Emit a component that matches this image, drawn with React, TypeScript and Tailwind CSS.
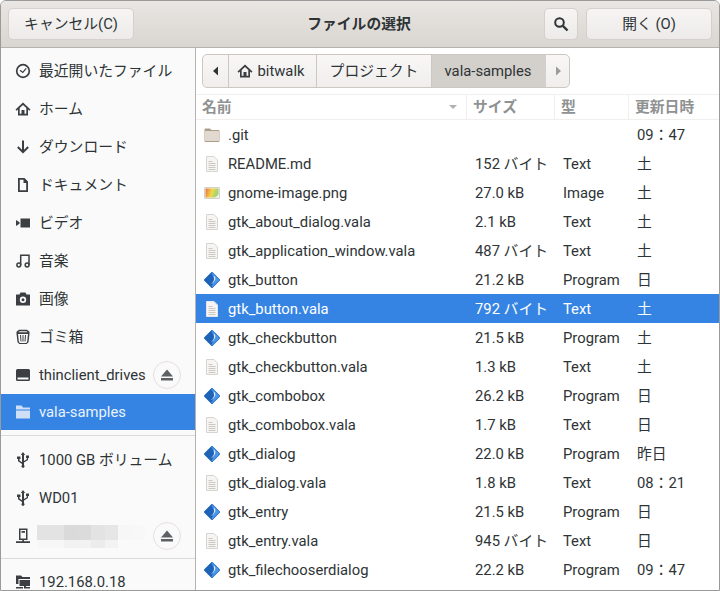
import type { ReactNode } from "react";

function Sym({ children, cls = "text-[#3b3f41]" }: { children: ReactNode; cls?: string }) {
  return (
    <svg viewBox="0 0 16 16" className={`w-4 h-4 shrink-0 ${cls}`} fill="currentColor">
      {children}
    </svg>
  );
}

const HomeIcon = () => (
  <Sym>
    <path
      fillRule="evenodd"
      d="M8 1.500 .500 8.600 1.700 9.800 3 8.600V14.500h10V8.600l1.300 1.200 1.200-1.200zM8 4l3.300 3.100V12.800H9.500V9h-3v3.800H4.700V7.100z"
    />
  </Sym>
);

const EjectIcon = () => (
  <svg viewBox="0 0 16 16" className="w-4 h-4 text-[#5d6163]" fill="currentColor">
    <path d="M8 2.500 14 9.500H2z M2 11h12v2.500H2z" />
  </svg>
);

const UsbIcon = () => (
  <Sym>
    <path d="M8 0 5.800 3H7v7.200L4.500 8.500V7H5.500V4.500H2V7h1v2.200l4 2.700v1.300a1.500 1.500 0 1 0 2 0V10.400l4-2.400V6h1V3.500h-3V6h.8v1.200L9 9V3h1.200z" />
  </Sym>
);

const sidebarIcons: Record<string, ReactNode> = {
  recent: (
    <Sym>
      <circle cx="8" cy="8" r="6.300" fill="none" stroke="currentColor" strokeWidth="1.700" />
      <path d="M5 7.200 7.800 9.500 11.200 5.300" fill="none" stroke="currentColor" strokeWidth="1.200" />
    </Sym>
  ),
  home: <HomeIcon />,
  down: (
    <Sym>
      <path d="M8 1.500V13M2.800 8 8 13.200 13.200 8" fill="none" stroke="currentColor" strokeWidth="2" />
    </Sym>
  ),
  doc: (
    <Sym>
      <path fillRule="evenodd" d="M3 1h6.500L13 4.500V15H3zm1.800 1.700v10.600h6.400V6H8.500V2.700z" />
    </Sym>
  ),
  video: (
    <Sym>
      <path d="M5.500 3.500H15v9H5.500zM1 5l3.500 2.200v1.600L1 11z" />
    </Sym>
  ),
  music: (
    <Sym>
      <g fill="none" stroke="currentColor" strokeWidth="1.500">
        <circle cx="3.800" cy="12" r="1.900" />
        <circle cx="12.100" cy="12" r="1.900" />
        <path d="M5.700 12V2.200H14V12" />
      </g>
    </Sym>
  ),
  camera: (
    <Sym>
      <path fillRule="evenodd" d="M5.500 1.500h5L11.500 3.500H15v11H1v-11h3.500zM8 5.500a3.200 3.200 0 1 0 0 6.400 3.200 3.200 0 0 0 0-6.400zM8 7.200a1.500 1.500 0 1 1 0 3 1.500 1.500 0 0 1 0-3z" />
    </Sym>
  ),
  trash: (
    <Sym>
      <path fillRule="evenodd" d="M4 .800h8l2.500 2v2l-1 8.500-1.800 1.700H4.300l-1.800-1.700-1-8.500v-2zM4.500 2.200 3.500 3.200h9l-1-1zM3 5l.9 8 1 1h6.200l1-1 .9-8z" />
      <path d="M5 6h1l.5 6.500h-1zM7.500 6h1v6.500h-1zM10 6h1l-.5 6.500h-1z" />
    </Sym>
  ),
  drive: (
    <Sym>
      <path fillRule="evenodd" d="M2.500 2h11A1.500 1.500 0 0 1 15 3.500v9a1.500 1.500 0 0 1-1.500 1.500h-11A1.500 1.500 0 0 1 1 12.500v-9A1.500 1.500 0 0 1 2.500 2zM2.500 10.500v2h11v-2z" />
    </Sym>
  ),
  folder: (
    <Sym cls="text-[#cfe0f6]">
      <path d="M1 1.500h5.500L8 3.500h7v2H1zM1 6.500h14V14.500H1z" />
    </Sym>
  ),
  usb: <UsbIcon />,
  computer: (
    <Sym>
      <path fillRule="evenodd" d="M4 .500h8.500v11.500H4zM5.500 2v8.500h5.500V2zM6.500 3h3.500v1.700H6.500zM7.300 12h1.600v1.300H15v1.700H1v-1.700h6.300z" />
    </Sym>
  ),
  network: (
    <Sym>
      <path d="M1 1.500h5l1.500 1.500H15v2H3.500v5H1z" />
      <path d="M4.500 6H15v6H11v1h4v1.500H9v-2.500H4.500z M1 13h7v1.500H1z" />
    </Sym>
  ),
};

function SideRow({ icon, label, eject }: { icon: string; label: ReactNode; eject?: boolean }) {
  return (
    <div className="h-[38px] shrink-0 flex items-center pl-[14px] pr-[14px] gap-2 text-[#2e3436]">
      {sidebarIcons[icon]}
      <div className="flex-1 min-w-0 whitespace-nowrap">{label}</div>
      {eject && (
        <div className="w-[28px] h-[28px] rounded-full border border-[#e6e0dd] flex items-center justify-center shrink-0">
          <EjectIcon />
        </div>
      )}
    </div>
  );
}

const mosaic = [
  ["#e3e3e3", "#e3e3e3", "#dadada", "#dbdbdb", "#e3e3e3", "#e6e6e6", "#f7f7f7", "#f8f8f8"],
  ["#f7f7f7", "#f7f7f7", "#f2f2f2", "#f2f2f2", "#ececec", "#f3f3f3", "#fafafa", "#fafafa"],
];

function Mosaic() {
  return (
    <div className="flex flex-col -ml-[2px]">
      {mosaic.map((row, i) => (
        <div key={i} className={`flex ${i === 0 ? "h-[15px]" : "h-[8px]"}`}>
          {row.map((c, j) => (
            <div key={j} className="w-[16px]" style={{ background: c }} />
          ))}
        </div>
      ))}
    </div>
  );
}

const TextFile = ({ selected }: { selected?: boolean }) => (
  <svg viewBox="0 0 16 16" className="w-4 h-4 shrink-0">
    <path d="M2.500.500h7.500l3.500 3.500v11.500h-11z" fill="#f6f5f4" stroke={selected ? "#e3e6ec" : "#d6d4cf"} />
    <path d="M4.500 5.500h4M4.500 7.500h7M4.500 9.500h7M4.500 11.500h7M4.500 13.500h7" stroke="#cbc8c2" fill="none" />
  </svg>
);

const FolderFile = () => (
  <svg viewBox="0 0 16 16" className="w-4 h-4 shrink-0">
    <path d="M.500 2.500a1 1 0 0 1 1-1h4.500l1.500 1.500h7a1 1 0 0 1 1 1v10a1 1 0 0 1-1 1h-13a1 1 0 0 1-1-1z" fill="#ad9d8b" />
    <rect x="1" y="4" width="14" height="10" rx="0.500" fill="#e1d9cf" />
  </svg>
);

const ImageFile = () => (
  <svg viewBox="0 0 16 16" className="w-4 h-4 shrink-0">
    <defs>
      <linearGradient id="gi" x1="0" y1="0.400" x2="1" y2="0.600">
        <stop offset="0" stopColor="#ee7f3c" />
        <stop offset="0.450" stopColor="#f3d64a" />
        <stop offset="1" stopColor="#8fd47a" />
      </linearGradient>
    </defs>
    <rect x="0.500" y="2.500" width="15" height="11" rx="0.500" fill="#f0f0ee" stroke="#d4d2cd" />
    <rect x="1.500" y="3.500" width="13" height="9" fill="url(#gi)" />
    <path d="M10.500 13l4.500-4v4z" fill="#eeeeea" />
  </svg>
);

const ProgramFile = () => (
  <svg viewBox="0 0 16 16" className="w-4 h-4 shrink-0">
    <path d="M8 1 15 8 8 15 1 8z" fill="#1f63b8" stroke="#1f63b8" strokeLinejoin="round" strokeWidth="2" />
    <path d="M8 .800 15.200 8 8 15.200 11 8z" fill="#4a96ea" stroke="#4a96ea" strokeLinejoin="round" strokeWidth="1" />
    <path d="M9.800 3.600C11.400 4.800 11.600 6 11.200 7.600 10.600 9.800 8.800 11.600 6.400 12.400 8.600 10.800 9.900 9.200 10 7.200 10.100 6 10 4.800 9.800 3.600z" fill="#dbe9fa" />
  </svg>
);

type Kind = "folder" | "text" | "image" | "program";

const files: { name: string; size: string; type: string; date: string; kind: Kind; selected?: boolean }[] = [
  { name: ".git", size: "", type: "", date: "09：47", kind: "folder" },
  { name: "README.md", size: "152 バイト", type: "Text", date: "土", kind: "text" },
  { name: "gnome-image.png", size: "27.0 kB", type: "Image", date: "土", kind: "image" },
  { name: "gtk_about_dialog.vala", size: "2.1 kB", type: "Text", date: "土", kind: "text" },
  { name: "gtk_application_window.vala", size: "487 バイト", type: "Text", date: "土", kind: "text" },
  { name: "gtk_button", size: "21.2 kB", type: "Program", date: "日", kind: "program" },
  { name: "gtk_button.vala", size: "792 バイト", type: "Text", date: "土", kind: "text", selected: true },
  { name: "gtk_checkbutton", size: "21.5 kB", type: "Program", date: "土", kind: "program" },
  { name: "gtk_checkbutton.vala", size: "1.3 kB", type: "Text", date: "土", kind: "text" },
  { name: "gtk_combobox", size: "26.2 kB", type: "Program", date: "日", kind: "program" },
  { name: "gtk_combobox.vala", size: "1.7 kB", type: "Text", date: "日", kind: "text" },
  { name: "gtk_dialog", size: "22.0 kB", type: "Program", date: "昨日", kind: "program" },
  { name: "gtk_dialog.vala", size: "1.8 kB", type: "Text", date: "08：21", kind: "text" },
  { name: "gtk_entry", size: "21.5 kB", type: "Program", date: "日", kind: "program" },
  { name: "gtk_entry.vala", size: "945 バイト", type: "Text", date: "日", kind: "text" },
  { name: "gtk_filechooserdialog", size: "22.2 kB", type: "Program", date: "09：47", kind: "program" },
];

function FileIcon({ kind, selected }: { kind: Kind; selected?: boolean }) {
  if (kind === "folder") return <FolderFile />;
  if (kind === "image") return <ImageFile />;
  if (kind === "program") return <ProgramFile />;
  return <TextFile selected={selected} />;
}

function HeaderButton({ children, cls }: { children: ReactNode; cls: string }) {
  return (
    <div
      className={`h-[32px] flex items-center justify-center rounded-[5px] border border-[#d5d0cc] bg-gradient-to-b from-[#f6f5f4] to-[#edebe9] ${cls}`}
    >
      {children}
    </div>
  );
}

const crumb = "h-full flex items-center justify-center border-r border-[#cdc7c2]";

export default function App() {
  return (
    <div className="w-[720px] h-[591px] overflow-hidden flex flex-col bg-white rounded-t-[6px] border border-[#9a9a98] text-[14.8px] text-[#2e3436] font-['Roboto','Noto_Sans_CJK_JP',sans-serif]">
      <header className="h-[47px] shrink-0 flex items-center px-[7px] bg-gradient-to-b from-[#e9e6e3] to-[#d9d5d0] border-b border-[#b6b2ad]">
        <HeaderButton cls="w-[126px]">キャンセル(C)</HeaderButton>
        <div className="flex-1 text-center font-bold pl-[40px]">ファイルの選択</div>
        <HeaderButton cls="w-[34px] mr-2">
          <svg viewBox="0 0 16 16" className="w-4 h-4" fill="none" stroke="#2e3436" strokeWidth="2">
            <circle cx="6.500" cy="6.500" r="4.300" />
            <path d="M10 10l4.500 4.500" strokeWidth="2.400" />
          </svg>
        </HeaderButton>
        <HeaderButton cls="w-[126px]">開く (O)</HeaderButton>
      </header>

      <div className="flex-1 flex min-h-0">
        <aside className="w-[195px] shrink-0 bg-[#fafafa] border-r border-[#b6b2ad] flex flex-col pt-[4px]">
          <SideRow icon="recent" label="最近開いたファイル" />
          <SideRow icon="home" label="ホーム" />
          <SideRow icon="down" label="ダウンロード" />
          <SideRow icon="doc" label="ドキュメント" />
          <SideRow icon="video" label="ビデオ" />
          <SideRow icon="music" label="音楽" />
          <SideRow icon="camera" label="画像" />
          <SideRow icon="trash" label="ゴミ箱" />
          <SideRow icon="drive" label="thinclient_drives" eject />
          <div className="h-[36px] shrink-0 flex items-center pl-[14px] gap-2 bg-[#3584e4] text-[#eaf2fc]">
            {sidebarIcons.folder}
            <span>vala-samples</span>
          </div>
          <div className="mt-[5px] mb-[5px] border-t border-[#dcdad7]" />
          <SideRow icon="usb" label="1000 GB ボリューム" />
          <SideRow icon="usb" label="WD01" />
          <SideRow icon="computer" label={<Mosaic />} eject />
          <div className="mt-[3px] mb-[4px] border-t border-[#dcdad7]" />
          <SideRow icon="network" label="192.168.0.18" />
        </aside>

        <main className="flex-1 min-w-0 flex flex-col bg-white">
          <div className="h-[46px] shrink-0 flex items-start pt-[6px] pl-[6px]">
            <div className="h-[34px] flex rounded-[5px] border border-[#cdc7c2] bg-gradient-to-b from-[#f8f7f6] to-[#f0eeec] overflow-hidden">
              <div className={`${crumb} w-[26px]`}>
                <svg viewBox="0 0 16 16" className="w-4 h-4" fill="#2e3436"><path d="M10 3.500v9L5 8z" /></svg>
              </div>
              <div className={`${crumb} w-[88px] gap-1 pr-[3px]`}>
                <HomeIcon />
                bitwalk
              </div>
              <div className={`${crumb} w-[115px]`}>プロジェクト</div>
              <div className="h-full w-[114px] pr-[2px] flex items-center justify-center bg-[#d3cfca]">vala-samples</div>
              <div className="h-full w-[23px] flex items-center justify-center">
                <svg viewBox="0 0 16 16" className="w-4 h-4" fill="#9a9a98"><path d="M6 3.500v9L11 8z" /></svg>
              </div>
            </div>
          </div>

          <div className="h-[26px] shrink-0 flex border-b border-t border-[#f0efed] font-bold text-[#8f9192]">
            <div className="w-[271px] pl-[6px] flex items-center justify-between pr-[8px] border-r border-[#f0efed]">
              名前
              <svg viewBox="0 0 10 6" className="w-[10px] h-[6px]" fill="#b0b0b0"><path d="M1 1h8L5 5z" /></svg>
            </div>
            <div className="w-[88px] pl-[6px] flex items-center border-r border-[#f0efed]">サイズ</div>
            <div className="w-[74px] pl-[6px] flex items-center border-r border-[#f0efed]">型</div>
            <div className="flex-1 pl-[6px] flex items-center whitespace-nowrap">更新日時</div>
          </div>

          <div className="flex-1 min-h-0 overflow-hidden">
            {files.map((f) => (
              <div
                key={f.name}
                className={`h-[29px] flex items-center ${f.selected ? "bg-[#3584e4] text-white" : ""}`}
              >
                <div className="w-[279px] pl-[8px] flex items-center gap-2 shrink-0 whitespace-nowrap">
                  <FileIcon kind={f.kind} selected={f.selected} />
                  <span className="pt-[2px]">{f.name}</span>
                </div>
                <div className="w-[88px] pt-[2px] shrink-0 whitespace-nowrap">{f.size}</div>
                <div className="w-[74px] pt-[2px] shrink-0">{f.type}</div>
                <div className="flex-1 pt-[2px] whitespace-nowrap">{f.date}</div>
              </div>
            ))}
          </div>
        </main>
      </div>
    </div>
  );
}
